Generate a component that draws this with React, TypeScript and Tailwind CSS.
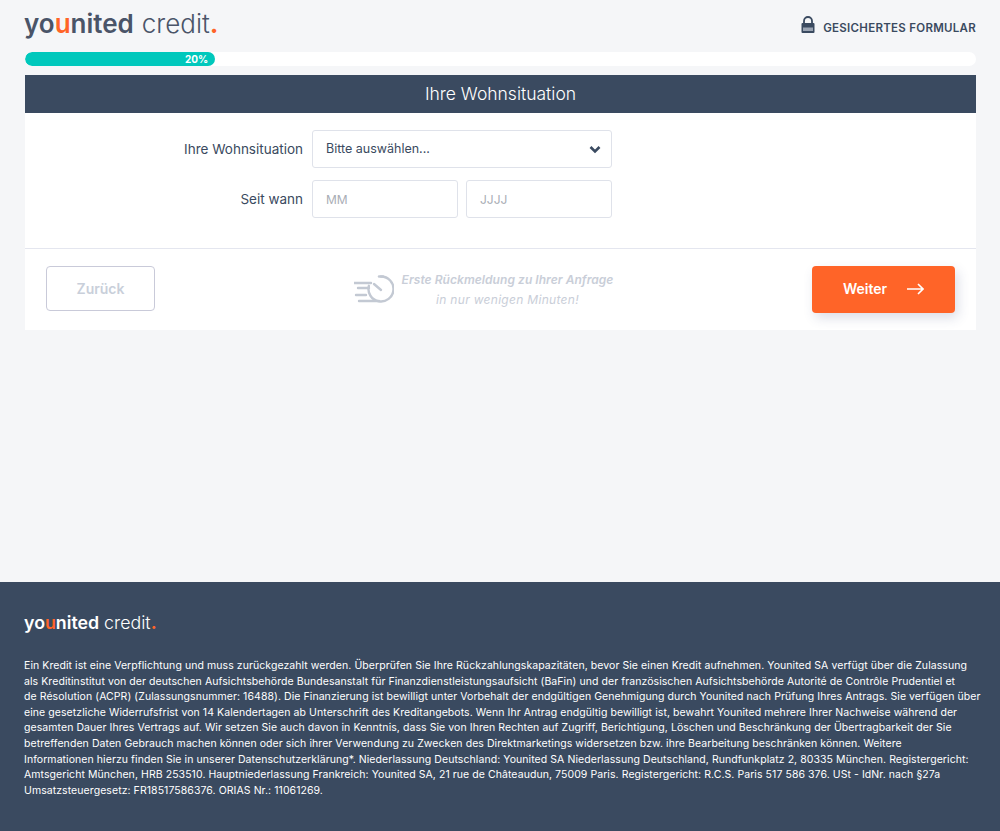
const lines = [
  "Ein Kredit ist eine Verpflichtung und muss zurückgezahlt werden. Überprüfen Sie Ihre Rückzahlungskapazitäten, bevor Sie einen Kredit aufnehmen. Younited SA verfügt über die Zulassung",
  "als Kreditinstitut von der deutschen Aufsichtsbehörde Bundesanstalt für Finanzdienstleistungsaufsicht (BaFin) und der französischen Aufsichtsbehörde Autorité de Contrôle Prudentiel et",
  "de Résolution (ACPR) (Zulassungsnummer: 16488). Die Finanzierung ist bewilligt unter Vorbehalt der endgültigen Genehmigung durch Younited nach Prüfung Ihres Antrags. Sie verfügen über",
  "eine gesetzliche Widerrufsfrist von 14 Kalendertagen ab Unterschrift des Kreditangebots. Wenn Ihr Antrag endgültig bewilligt ist, bewahrt Younited mehrere Ihrer Nachweise während der",
  "gesamten Dauer Ihres Vertrags auf. Wir setzen Sie auch davon in Kenntnis, dass Sie von Ihren Rechten auf Zugriff, Berichtigung, Löschen und Beschränkung der Übertragbarkeit der Sie",
  "betreffenden Daten Gebrauch machen können oder sich ihrer Verwendung zu Zwecken des Direktmarketings widersetzen bzw. ihre Bearbeitung beschränken können. Weitere",
  "Informationen hierzu finden Sie in unserer Datenschutzerklärung*. Niederlassung Deutschland: Younited SA Niederlassung Deutschland, Rundfunkplatz 2, 80335 München. Registergericht:",
  "Amtsgericht München, HRB 253510. Hauptniederlassung Frankreich: Younited SA, 21 rue de Châteaudun, 75009 Paris. Registergericht: R.C.S. Paris 517 586 376. USt - IdNr. nach §27a",
  "Umsatzsteuergesetz: FR18517586376. ORIAS Nr.: 11061269.",
];

function Lock() {
  return (
    <svg width="14" height="17" viewBox="0 0 14 17" aria-hidden="true">
      <path d="M3 8V5a4 4 0 0 1 8 0v3" fill="none" stroke="#3a4a60" strokeWidth="1.8" />
      <rect x="0.5" y="7" width="13" height="10" rx="1" fill="#3a4a60" />
      <rect x="2" y="11.5" width="10" height="3.5" fill="#9aa4b3" />
    </svg>
  );
}

function Chevron() {
  return (
    <svg width="12" height="9" viewBox="0 0 12 9" aria-hidden="true">
      <path d="M1.5 2 6 6.5 10.5 2" fill="none" stroke="#3a4a60" strokeWidth="2.6" />
    </svg>
  );
}

function Timer() {
  return (
    <svg width="40" height="30" viewBox="0 0 40 30" fill="none" stroke="#c3c9d3" strokeWidth="2.4" strokeLinecap="round" aria-hidden="true">
      <path d="M27 1.5A12.5 12.5 0 1 1 14.9 10.8" />
      <path d="M25 1.5h4" />
      <path d="M20 9l7 6" />
      <path d="M0 8h17M4 13h11M2 20h10M5 26h20" />
    </svg>
  );
}

function Arrow() {
  return (
    <svg width="17" height="12" viewBox="0 0 17 12" fill="none" stroke="#fff" strokeWidth="1.6" aria-hidden="true">
      <path d="M0 6h16M11 1l5 5-5 5" />
    </svg>
  );
}

function Logo({ big }: { big: boolean }) {
  return (
    <div
      className={
        big
          ? "text-[26px] leading-none text-[#4a5468] whitespace-nowrap"
          : "text-[17.8px] leading-[18px] text-white whitespace-nowrap"
      }
    >
      <span className="font-semibold">
        yo<span className="text-[#ff6428]">u</span>nited
      </span>
      <span className={big ? "font-light ml-[8px]" : "font-light ml-[5px]"}>
        credit<span className="text-[#ff6428] font-bold">.</span>
      </span>
    </div>
  );
}

export default function App() {
  return (
    <div className="min-h-[831px] flex flex-col bg-[#f5f6f8] font-['Inter',sans-serif]">
      <main className="flex-1 pl-[25px] pr-[24px]">
        <header className="h-[52px] flex items-start justify-between pt-[11px] -ml-[1px]">
          <Logo big={true} />
          <div className="flex items-start gap-[8px] mt-[5px]">
            <Lock />
            <span className="mt-[5px] leading-[14px] text-[11.5px] font-semibold tracking-[0.28px] text-[#3a4a60]">GESICHERTES FORMULAR</span>
          </div>
        </header>
        <div className="h-[14px] rounded-full bg-white overflow-hidden">
          <div className="h-full w-[20%] rounded-full bg-[#00c8bc] flex items-center justify-end pr-[7px] text-[10px] font-bold text-white">
            20%
          </div>
        </div>
        <h1 className="mt-[9px] h-[38px] bg-[#3a4a60] flex items-center justify-center pt-[1px] text-[17.5px] font-light text-white">
          Ihre Wohnsituation
        </h1>
        <section className="bg-white h-[217px] flex flex-col">
          <div className="h-[136px] border-b border-[#e4e6ef] pt-[17px] flex flex-col gap-[12px]">
            <div className="flex items-center">
              <label className="w-[278px] text-right text-[13.5px] text-[#3a4a60]">Ihre Wohnsituation</label>
              <div className="ml-[9px] w-[300px] h-[38px] border border-[#dfe2ea] rounded-[3px] flex items-center justify-between pl-[13px] pr-[10px] text-[12.5px] text-[#3a4a60]">
                <span>Bitte auswählen...</span>
                <Chevron />
              </div>
            </div>
            <div className="flex items-center">
              <label className="w-[278px] text-right text-[13.5px] text-[#3a4a60]">Seit wann</label>
              <div className="ml-[9px] w-[300px] flex gap-[8px]">
                <div className="flex-1 h-[38px] pt-[1px] border border-[#dfe2ea] rounded-[3px] flex items-center pl-[13px] text-[12px] text-[#a9adb5]">MM</div>
                <div className="flex-1 h-[38px] pt-[1px] border border-[#dfe2ea] rounded-[3px] flex items-center pl-[13px] text-[12px] text-[#a9adb5]">JJJJ</div>
              </div>
            </div>
          </div>
          <div className="flex-1 flex items-start justify-between px-[21px] pt-[17px]">
            <button className="w-[109px] h-[45px] border border-[#c9cad9] rounded-[4px] text-[14px] font-semibold text-[#c9cfda]">Zurück</button>
            <div className="flex items-center gap-[8px] mt-[4px]">
              <Timer />
              <div className="text-center italic text-[12px] tracking-[0.05px] text-[#c9ced8] leading-[19.5px]">
                <div className="font-semibold">Erste Rückmeldung zu Ihrer Anfrage</div>
                <div className="tracking-[0.3px]">in nur wenigen Minuten!</div>
              </div>
            </div>
            <button className="w-[143px] h-[47px] pb-[2px] rounded-[4px] bg-[#ff6428] shadow-[3px_5px_12px_rgba(60,70,130,0.18)] flex items-center justify-center gap-[20px] text-[14px] font-semibold text-white">
              Weiter
              <Arrow />
            </button>
          </div>
        </section>
      </main>
      <footer className="h-[249px] bg-[#3a4a60] px-[24px] pt-[32px] text-white">
        <Logo big={false} />
        <div className="mt-[26px] text-[10.5px] leading-[15.6px] tracking-[0.07px]">
          {lines.map((l) => (
            <div key={l} className="whitespace-nowrap">{l}</div>
          ))}
        </div>
      </footer>
    </div>
  );
}
